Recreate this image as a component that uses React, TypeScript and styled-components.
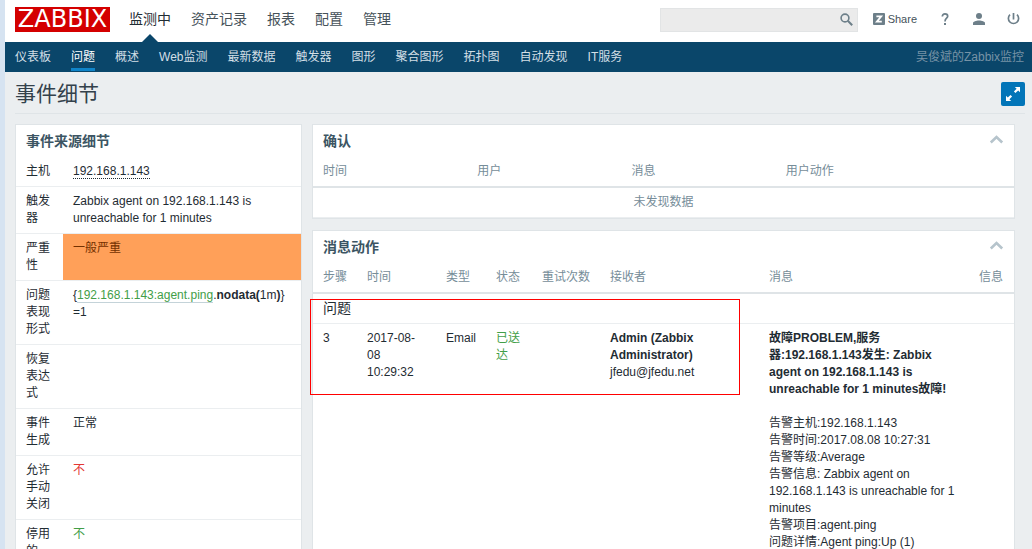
import React from "react";
import styled, { createGlobalStyle, css } from "styled-components";

const GlobalStyle = createGlobalStyle`
  * { box-sizing: border-box; }
  html, body { margin: 0; padding: 0; }
  body {
    background: #ebeef0;
    color: #1f2c33;
    font: 12px/17px "Liberation Sans", "Noto Sans CJK SC", sans-serif;
  }
  a { color: inherit; text-decoration: none; }
  button { font: inherit; border: 0; padding: 0; background: none; cursor: pointer; }
  h1, h2, ul { margin: 0; padding: 0; font-weight: normal; list-style: none; }
`;

const Shell = styled.div`
  height: 100vh;
  overflow: hidden;
  border-left: 5px solid #d6e3f1;
`;

const TopBar = styled.header`
  display: flex;
  align-items: center;
  height: 42px;
  padding: 0 12px 0 10px;
  background: #fff;
`;

const Logo = styled.a`
  display: flex;
  align-items: center;
  justify-content: center;
  width: 95px;
  height: 25px;
  margin: 0 19px 4px 0;
  background: #d40000;
  color: #fff;
  font: 24px/25px "DejaVu Sans", sans-serif;
`;

const MainNav = styled.nav`
  display: flex;
  gap: 20px;
  align-self: stretch;
  flex: 1;
`;

const MainLink = styled.a<{ $active?: boolean }>`
  position: relative;
  font-size: 14px;
  line-height: 38px;
  white-space: nowrap;
  color: ${(p) => (p.$active ? "#1f2c33" : "#46525a")};
  ${(p) =>
    p.$active &&
    css`
      &::after {
        content: "";
        position: absolute;
        bottom: 0;
        left: calc(50% - 8px);
        border: 8px solid transparent;
        border-top: 0;
        border-bottom-color: #0a466a;
      }
    `}
`;

const SearchBox = styled.form`
  display: flex;
  align-items: center;
  width: 198px;
  height: 24px;
  margin: 0 15px 2px 0;
  padding: 0 4px 2px 0;
  background: #ebebeb;
  border: 1px solid #e2e4e5;
`;

const SearchInput = styled.input`
  flex: 1;
  min-width: 0;
  height: 100%;
  border: 0;
  padding: 0 5px;
  background: transparent;
  font: inherit;
  outline: none;
`;

const IconButton = styled.button`
  display: flex;
  color: #6d7f89;
`;

const Tools = styled.div`
  display: flex;
  align-items: center;
  gap: 22px;
  margin-bottom: 4px;
`;

const ShareLink = styled.a`
  display: flex;
  align-items: center;
  gap: 2px;
  color: #46525a;
  font-size: 11px;
`;

const SubBar = styled.div`
  display: flex;
  justify-content: space-between;
  height: 30px;
  padding: 0 8px 0 10px;
  background: #0a466a;
`;

const SubNav = styled.nav`
  display: flex;
  gap: 20px;
`;

const SubLink = styled.a<{ $active?: boolean }>`
  height: 29px;
  line-height: 30px;
  white-space: nowrap;
  color: ${(p) => (p.$active ? "#fff" : "#d3dfe6")};
  border-bottom: 3px solid ${(p) => (p.$active ? "#0f84c9" : "transparent")};
`;

const ServerName = styled.span`
  line-height: 30px;
  white-space: nowrap;
  color: #7793a6;
`;

const Page = styled.main`
  padding: 10px 7px 0 10px;
`;

const TitleRow = styled.div`
  display: flex;
  justify-content: space-between;
  padding-bottom: 7px;
  border-bottom: 1px solid #dfe4e7;
`;

const Title = styled.h1`
  font-size: 21px;
  line-height: 24px;
  color: #33414b;
`;

const FullscreenButton = styled.button`
  width: 24px;
  height: 24px;
  border-radius: 2px;
  background: #0275b8;
  color: #fff;
`;

const Columns = styled.div`
  display: grid;
  grid-template-columns: 287px minmax(0, 1fr);
  align-items: start;
  gap: 10px;
  padding: 10px 10px 0 0;
`;

const Stack = styled.div`
  display: grid;
  gap: 11px;
`;

const Panel = styled.section`
  position: relative;
  background: #fff;
  border: 1px solid #dfe4e7;
`;

const PanelHead = styled.div`
  display: flex;
  align-items: center;
  justify-content: space-between;
  height: 32px;
  padding: 0 10px;
`;

const PanelTitle = styled.h2`
  font-size: 14px;
  line-height: 20px;
  font-weight: bold;
  color: #3c5563;
`;

const CollapseButton = styled(IconButton)`
  padding-bottom: 4px;
  color: #b6c4cc;
`;

const Table = styled.table`
  width: 100%;
  table-layout: fixed;
  border-spacing: 0;
`;

const HeadCell = styled.th`
  padding: 6px 10px;
  border-bottom: 2px solid #dfe4e7;
  color: #768d99;
  font-weight: normal;
  text-align: left;
  white-space: nowrap;
`;

const Cell = styled.td<{ $tone?: "ok" | "bad" | "average" | "muted" }>`
  padding: 6px 10px;
  border-bottom: 1px solid #ebeef0;
  vertical-align: top;
  ${(p) => p.$tone === "ok" && "color: #429e47;"}
  ${(p) => p.$tone === "bad" && "color: #e33734;"}
  ${(p) => p.$tone === "average" && "color: #733100; background: #ffa059;"}
  ${(p) => p.$tone === "muted" && "color: #768d99; text-align: center;"}
`;

const LabelCell = styled.th`
  padding: 6px 10px;
  border-bottom: 1px solid #ebeef0;
  font-weight: normal;
  text-align: left;
  vertical-align: top;
`;

const GroupCell = styled(Cell)`
  font-size: 14px;
`;

const HostLink = styled.a`
  border-bottom: 1px dotted #1f2c33;
`;

const ItemLink = styled.a`
  color: #429e47;
  border-bottom: 1px solid #c4d3d9;
`;

const Marker = styled.div`
  position: absolute;
  top: 68px;
  left: -3px;
  width: 430px;
  height: 96px;
  border: 1px solid #f00;
  pointer-events: none;
`;

const MAIN_MENU = ["监测中", "资产记录", "报表", "配置", "管理"];
const SUB_MENU = [
  "仪表板", "问题", "概述", "Web监测", "最新数据", "触发器",
  "图形", "聚合图形", "拓扑图", "自动发现", "IT服务",
];

type Detail = { label: string; value?: React.ReactNode; tone?: "ok" | "bad" | "average" };

const DETAILS: Detail[] = [
  { label: "主机", value: <HostLink href="#host">192.168.1.143</HostLink> },
  { label: "触发器", value: "Zabbix agent on 192.168.1.143 is unreachable for 1 minutes" },
  { label: "严重性", value: "一般严重", tone: "average" },
  {
    label: "问题表现形式",
    value: (
      <>
        {"{"}
        <ItemLink href="#item">192.168.1.143:agent.ping</ItemLink>.<b>nodata(</b>1m<b>)</b>
        {"}"}
        <wbr />
        =1
      </>
    ),
  },
  { label: "恢复表达式" },
  { label: "事件生成", value: "正常" },
  { label: "允许手动关闭", value: "不", tone: "bad" },
  { label: "停用的", value: "不", tone: "ok" },
];

const ACTION_COLUMNS: [string, string][] = [
  ["步骤", "44px"], ["时间", "79px"], ["类型", "50px"], ["状态", "46px"],
  ["重试次数", "68px"], ["接收者", "159px"], ["消息", "auto"], ["信息", "45px"],
];

const MESSAGE = [
  "告警主机:192.168.1.143",
  "告警时间:2017.08.08 10:27:31",
  "告警等级:Average",
  "告警信息: Zabbix agent on 192.168.1.143 is unreachable for 1 minutes",
  "告警项目:agent.ping",
  "问题详情:Agent ping:Up (1)",
];

const Chevron = () => (
  <svg width="15" height="10" viewBox="0 0 15 10" fill="none" stroke="currentColor" strokeWidth="2.6">
    <path d="M1.800 8.500 7.500 3l5.700 5.500" />
  </svg>
);

function PanelHeader({ title, collapsible }: { title: string; collapsible?: boolean }) {
  return (
    <PanelHead>
      <PanelTitle>{title}</PanelTitle>
      {collapsible && (
        <CollapseButton type="button" aria-label={"折叠 " + title}>
          <Chevron />
        </CollapseButton>
      )}
    </PanelHead>
  );
}

export default function App() {
  return (
    <Shell>
      <GlobalStyle />
      <TopBar>
        <Logo href="#home">ZABBIX</Logo>
        <MainNav>
          {MAIN_MENU.map((name, i) => (
            <MainLink key={name} href="#menu" $active={i === 0}>{name}</MainLink>
          ))}
        </MainNav>
        <SearchBox>
          <SearchInput type="text" aria-label="搜索" />
          <IconButton type="button" aria-label="搜索">
            <svg width="13" height="13" viewBox="0 0 13 13" fill="none" stroke="currentColor">
              <circle cx="5" cy="5" r="3.9" strokeWidth="1.6" />
              <path d="m7.8 7.8 4.4 4.4" strokeWidth="2" />
            </svg>
          </IconButton>
        </SearchBox>
        <Tools>
          <ShareLink href="#share">
            <svg width="13" height="12" viewBox="0 0 13 12">
              <rect width="12" height="12" rx="1" fill="#6d7f89" />
              <path d="M3.4 3.4h4.8L3.9 8.6h4.9" fill="none" stroke="#fff" strokeWidth="1.8" />
            </svg>
            Share
          </ShareLink>
          <IconButton type="button" aria-label="帮助">
            <svg width="12" height="12" viewBox="0 0 12 12" fill="none" stroke="currentColor">
              <path d="M3.3 3.6C3.3 1.9 4.4.9 6 .9s2.7 1 2.7 2.4C8.7 5.3 6 5.3 6 8.4" strokeWidth="1.7" />
              <path d="M6 9.9v2" strokeWidth="2" />
            </svg>
          </IconButton>
          <IconButton type="button" aria-label="用户">
            <svg width="12" height="12" viewBox="0 0 12 12" fill="currentColor">
              <circle cx="6" cy="3" r="3" />
              <path d="M0 12V10.2C0 8.6 3 7.5 6 7.5s6 1.1 6 2.7V12z" />
            </svg>
          </IconButton>
          <IconButton type="button" aria-label="退出">
            <svg width="13" height="12" viewBox="0 0 13 12" fill="none" stroke="currentColor" strokeWidth="1.7">
              <path d="M6.5 0v6.5M3 1.7A5.1 5.1 0 1 0 10 1.7" />
            </svg>
          </IconButton>
        </Tools>
      </TopBar>
      <SubBar>
        <SubNav>
          {SUB_MENU.map((name, i) => (
            <SubLink key={name} href="#submenu" $active={i === 1}>{name}</SubLink>
          ))}
        </SubNav>
        <ServerName>吴俊斌的Zabbix监控</ServerName>
      </SubBar>
      <Page>
        <TitleRow>
          <Title>事件细节</Title>
          <FullscreenButton type="button" aria-label="全屏">
            <svg width="24" height="24" viewBox="0 0 24 24" fill="currentColor">
              <path d="M13.800 5H19v5.200l-1.800-1.800-2.700 2.700-1.600-1.600 2.700-2.700zM10.200 19H5v-5.200l1.800 1.800 2.700-2.700 1.600 1.600-2.700 2.700z" />
            </svg>
          </FullscreenButton>
        </TitleRow>
        <Columns>
          <Panel>
            <PanelHeader title="事件来源细节" />
            <Table>
              <colgroup>
                <col width="47" />
                <col />
              </colgroup>
              <tbody>
                {DETAILS.map((d) => (
                  <tr key={d.label}>
                    <LabelCell scope="row">{d.label}</LabelCell>
                    <Cell $tone={d.tone}>{d.value}</Cell>
                  </tr>
                ))}
              </tbody>
            </Table>
          </Panel>
          <Stack>
            <Panel>
              <PanelHeader title="确认" collapsible />
              <Table>
                <colgroup>
                  <col width="22%" />
                  <col width="22%" />
                  <col width="22%" />
                  <col />
                </colgroup>
                <thead>
                  <tr>
                    {["时间", "用户", "消息", "用户动作"].map((h) => (
                      <HeadCell key={h} scope="col">{h}</HeadCell>
                    ))}
                  </tr>
                </thead>
                <tbody>
                  <tr>
                    <Cell colSpan={4} $tone="muted">未发现数据</Cell>
                  </tr>
                </tbody>
              </Table>
            </Panel>
            <Panel>
              <PanelHeader title="消息动作" collapsible />
              <Table>
                <colgroup>
                  {ACTION_COLUMNS.map(([name, width]) => (
                    <col key={name} style={{ width }} />
                  ))}
                </colgroup>
                <thead>
                  <tr>
                    {ACTION_COLUMNS.map(([name]) => (
                      <HeadCell key={name} scope="col">{name}</HeadCell>
                    ))}
                  </tr>
                </thead>
                <tbody>
                  <tr>
                    <GroupCell colSpan={8}>问题</GroupCell>
                  </tr>
                  <tr>
                    <Cell>3</Cell>
                    <Cell>2017-08-<wbr />08 10:29:32</Cell>
                    <Cell>Email</Cell>
                    <Cell $tone="ok">已送达</Cell>
                    <Cell />
                    <Cell>
                      <b>Admin (Zabbix Administrator)</b>
                      <br />
                      jfedu@jfedu.net
                    </Cell>
                    <Cell>
                      <b>故障PROBLEM,服务器:192.168.1.143发生: Zabbix agent on 192.168.1.143 is unreachable for 1 minutes故障!</b>
                      <br />
                      <br />
                      {MESSAGE.map((line) => (
                        <div key={line}>{line}</div>
                      ))}
                    </Cell>
                    <Cell />
                  </tr>
                </tbody>
              </Table>
              <Marker />
            </Panel>
          </Stack>
        </Columns>
      </Page>
    </Shell>
  );
}
